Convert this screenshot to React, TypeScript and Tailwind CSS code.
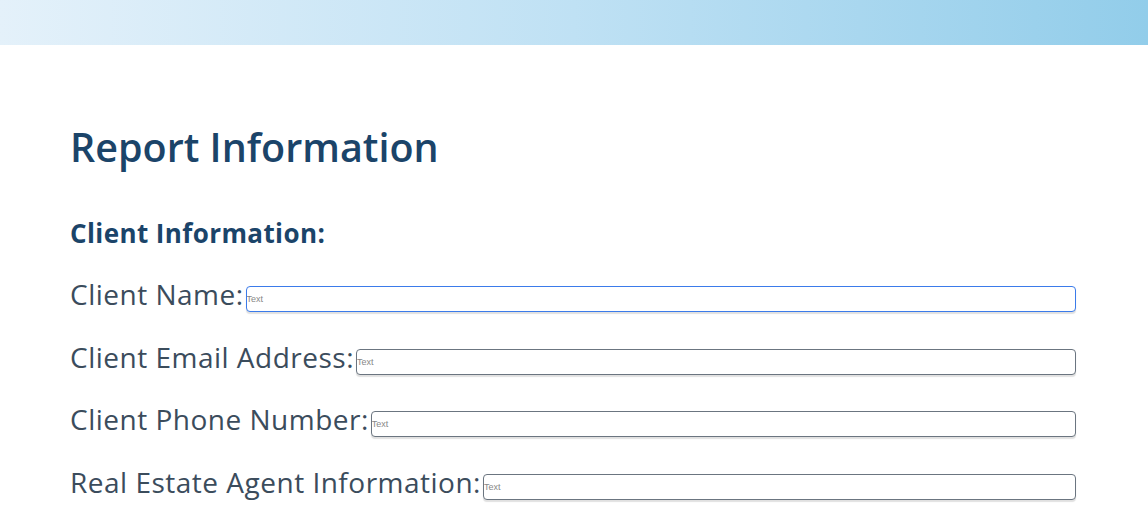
import React from "react";

const rows = [
  { label: "Client Name:", focused: true },
  { label: "Client Email Address:", focused: false },
  { label: "Client Phone Number:", focused: false },
  { label: "Real Estate Agent Information:", focused: false },
];

export default function App() {
  return (
    <div className="min-h-[532px] w-full bg-white" style={{ fontFamily: '"Open Sans", "Noto Sans", sans-serif' }}>
      <div className="h-[45px] w-full bg-gradient-to-r from-[#e4f1fa] via-[#bfe1f4] to-[#92cdea]" />
      <div className="pl-[70px] pr-[72px]">
        <h1 className="mt-[78px] text-[39.5px] font-semibold leading-[48px] text-[#1b4469]">Report Information</h1>
        <h2 className="mt-[46px] text-[26px] font-bold leading-[32px] tracking-[0.4px] text-[#1b4469]">Client Information:</h2>
        <div className="mt-[29px] flex flex-col gap-[28.67px]">
          {rows.map((r) => (
            <div key={r.label} className="flex items-start">
              <span className="text-[28px] leading-[32px] text-[#3b4c5c] tracking-[0.5px]">{r.label}</span>
              <input
                placeholder="Text"
                className={
                  "ml-[2px] mt-[8px] h-[26px] flex-1 rounded-[4px] border bg-white px-0 text-[9px] text-[#444] placeholder:text-[#888] shadow-[0_2px_1px_rgba(0,0,0,0.12)] outline-none " +
                  (r.focused ? "border-[#3b7bea]" : "border-[#6b7580]")
                }
                style={{ fontFamily: '"Liberation Sans", Arial, sans-serif' }}
              />
            </div>
          ))}
        </div>
      </div>
    </div>
  );
}
